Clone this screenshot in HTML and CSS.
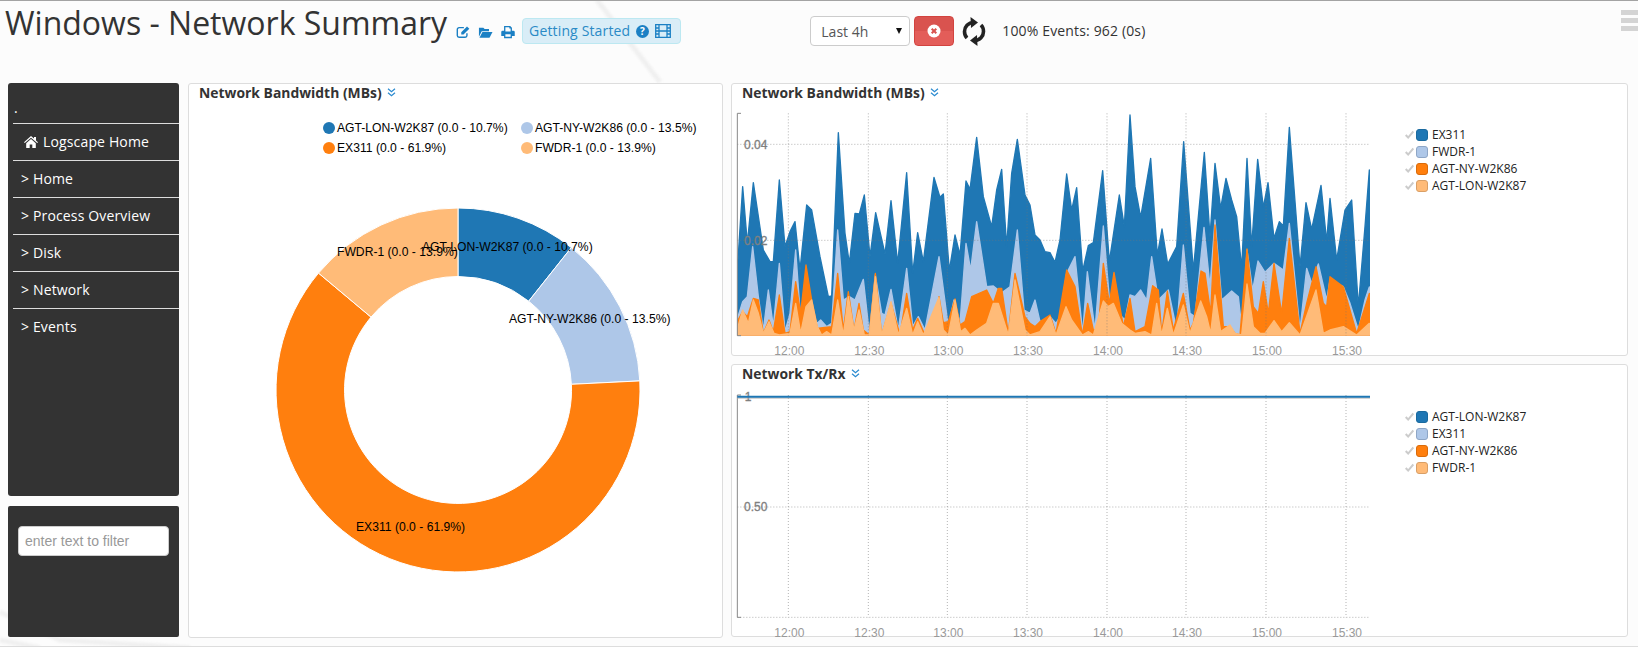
FILE: index.html
```html
<!DOCTYPE html>
<html>
<head>
	<meta charset="utf-8">
	<title>Windows - Network Summary</title>
	<link rel="stylesheet" href="styles.css">
</head>
<body>
<svg class="backdrop" width="1638" height="648" viewBox="0 0 1638 648">
	<path d="M597 0 660 82" class="streak"/>
	<path d="M0 612 60 640 190 648" class="streak"/>
	<path d="M0 640 40 648" class="streak"/>
</svg>

<div class="header">
	<h1 class="title">Windows - Network Summary</h1>
	<div class="tools">
		<svg class="tool" width="14" height="14" viewBox="0 0 16 16"><path d="M12.5 9.5V12a2 2 0 0 1-2 2H3.5a2 2 0 0 1-2-2V5a2 2 0 0 1 2-2H9" fill="none" stroke="currentColor" stroke-width="1.6"/><path d="M6 8.2 12.6 1.6l2.6 2.6L8.6 10.8H6z" fill="currentColor"/></svg>
		<svg class="tool" width="15" height="14" viewBox="0 0 17 16"><path d="M1 13.5V3h5l1.5 1.7h5V7H4.2z" fill="currentColor"/><path d="M5 8h11.5l-3.4 6.5H1.6z" fill="currentColor"/></svg>
		<svg class="tool" width="14" height="14" viewBox="0 0 16 16"><path fill-rule="evenodd" d="M3.5 1h7L12.5 3v3.5h1.7A1.5 1.5 0 0 1 15.700 8v4.500H12.500V15h-9v-2.500H.300V8a1.500 1.500 0 0 1 1.500-1.500h1.700zM5 2.500v5h6v-3.500H9.500V2.500zM5 10.500v3h6v-3z" fill="currentColor"/></svg>
		<div class="started">
			<span>Getting Started</span>
			<svg width="13" height="13" viewBox="0 0 13 13"><circle cx="6.500" cy="6.500" r="6.500" fill="currentColor"/><text x="6.500" y="10.300" class="qmark">?</text></svg>
			<svg width="16" height="14" viewBox="0 0 16 14"><path d="M.700.700h14.600v12.600H.700zM4 .700v12.600M12 .700v12.600M.700 4H4M.700 7H4M.700 10H4M12 4h3.300M12 7h3.300M12 10h3.300M4 7h8" fill="none" stroke="currentColor" stroke-width="1.300"/></svg>
		</div>
	</div>
	<div class="controls">
		<div class="period-wrap"><select class="period"><option>Last 4h</option></select></div>
		<button class="stop">
			<svg width="14" height="14" viewBox="0 0 14 14"><circle cx="7" cy="7" r="6.500" fill="#fff"/><path d="M4.700 4.700l4.600 4.600M9.300 4.700 4.700 9.300" stroke="#d9534f" stroke-width="2"/></svg>
		</button>
		<svg class="refresh" width="26" height="29" viewBox="0 0 26 29">
			<path d="M13 5.500C7 5.500 3.500 10 3.500 14.500c0 3 1 5 2.500 6.500" fill="none" stroke="#222" stroke-width="3.600"/>
			<path d="M9.500 0 17 5.500 10 11z" fill="#222"/>
			<path d="M13 23.500c6 0 9.500-4.500 9.500-9 0-3-1-5-2.500-6.500" fill="none" stroke="#222" stroke-width="3.600"/>
			<path d="M16.500 29 9 23.500 16 18z" fill="#222"/>
		</svg>
		<span class="events">100% Events: 962 (0s)</span>
	</div>
	<div class="burger"><i></i><i></i><i></i></div>
</div>

<div class="main">
	<div class="side">
		<div class="menu">
			<div class="menu-top">.</div>
			<ul>
				<li><svg class="home" width="14" height="12" viewBox="0 0 14 12"><path d="M7 0 10 2.600V1h2v3.400L14 6.200l-.8.900L7 1.800.8 7.100 0 6.200z" fill="#fff"/><path d="M2.200 7.200 7 3.100l4.800 4.100V12H8.300V8.600H5.700V12H2.200z" fill="#fff"/></svg>Logscape Home</li>
				<li class="link">&gt; Home</li>
				<li class="link">&gt; Process Overview</li>
				<li class="link">&gt; Disk</li>
				<li class="link">&gt; Network</li>
				<li class="link">&gt; Events</li>
			</ul>
		</div>
		<div class="filter">
			<input type="text" placeholder="enter text to filter">
		</div>
	</div>

	<div class="panel">
		<div class="panel-title">Network Bandwidth (MBs)<svg class="more" width="9" height="9" viewBox="0 0 9 9"><path d="M1 .800 4.500 3.800 8 .800M1 4.800 4.500 7.800 8 4.800" fill="none" stroke="currentColor" stroke-width="1.200"/></svg></div>
		<svg class="pie" width="533" height="536" viewBox="189 101 533 536">
			<g class="pie-slices">
				<path fill="#1f77b4" d="M458 208A182 182 0 0 1 571.300 247.600L528.700 301.200A113.500 113.500 0 0 0 458 276.500Z"/>
				<path fill="#aec7e8" d="M571.300 247.600A182 182 0 0 1 639.800 380.900L571.400 384.300A113.500 113.500 0 0 0 528.700 301.200Z"/>
				<path fill="#ff7f0e" d="M639.800 380.900A182 182 0 1 1 318.500 273.100L371 317.100A113.500 113.500 0 1 0 571.400 384.300Z"/>
				<path fill="#ffbb78" d="M318.500 273.100A182 182 0 0 1 458 208L458 276.500A113.500 113.500 0 0 0 371 317.100Z"/>
			</g>
			<circle cx="329" cy="128" r="6" fill="#1f77b4"/>
			<text x="337" y="132" class="pie-text">AGT-LON-W2K87 (0.0 - 10.7%)</text>
			<circle cx="527" cy="128" r="6" fill="#aec7e8"/>
			<text x="535" y="132" class="pie-text">AGT-NY-W2K86 (0.0 - 13.5%)</text>
			<circle cx="329" cy="148" r="6" fill="#ff7f0e"/>
			<text x="337" y="152" class="pie-text">EX311 (0.0 - 61.9%)</text>
			<circle cx="527" cy="148" r="6" fill="#ffbb78"/>
			<text x="535" y="152" class="pie-text">FWDR-1 (0.0 - 13.9%)</text>
			<text x="337" y="256" class="pie-text">FWDR-1 (0.0 - 13.9%)</text>
			<text x="422" y="251" class="pie-text">AGT-LON-W2K87 (0.0 - 10.7%)</text>
			<text x="509" y="323" class="pie-text">AGT-NY-W2K86 (0.0 - 13.5%)</text>
			<text x="356" y="531" class="pie-text">EX311 (0.0 - 61.9%)</text>
		</svg>
	</div>

	<div class="charts">
		<div class="panel">
			<div class="panel-title">Network Bandwidth (MBs)<svg class="more" width="9" height="9" viewBox="0 0 9 9"><path d="M1 .800 4.500 3.800 8 .800M1 4.800 4.500 7.800 8 4.800" fill="none" stroke="currentColor" stroke-width="1.200"/></svg></div>
			<div class="chart-row">
				<svg class="chart" width="638" height="254" viewBox="6 3 1914 762">
					<polygon class="a1" points="24,705 24,480 38,260 52,430 70,248 100,450 120,485 130,485 148,240 165,440 180,395 195,365 210,510 230,315 245,330 270,470 295,590 305,588 325,98 345,400 358,490 375,340 388,342 403,285 420,470 437,338 465,462 483,302 503,490 530,218 548,520 563,398 580,485 612,232 630,292 640,282 658,512 675,405 690,465 708,243 720,268 740,112 760,290 785,380 800,270 815,208 830,440 845,220 862,118 885,285 900,315 915,405 930,420 945,455 960,458 975,487 990,420 1010,222 1025,330 1040,263 1058,513 1075,437 1090,428 1118,212 1138,485 1168,285 1183,380 1200,45 1215,260 1232,352 1262,175 1282,465 1296,387 1313,492 1340,440 1361,125 1390,512 1423,157 1440,410 1455,190 1472,325 1488,235 1505,300 1520,350 1535,505 1551,175 1565,440 1583,178 1600,322 1614,248 1632,415 1648,365 1660,378 1678,82 1710,500 1728,308 1745,388 1773,256 1790,425 1800,295 1820,480 1845,330 1865,300 1885,620 1905,380 1918,210 1918,705"/>
					<polygon class="a2" points="24,705 24,650 38,605 52,590 68,440 85,590 100,690 115,570 130,680 148,490 165,695 180,640 197,450 212,660 228,560 245,640 262,670 272,660 290,680 305,670 323,390 340,600 358,590 375,600 400,538 418,700 436,525 455,640 465,645 483,568 505,690 530,505 548,680 565,650 585,690 627,470 655,680 672,600 690,670 708,430 722,510 740,365 770,560 790,558 815,578 840,560 862,390 882,630 900,640 915,600 930,665 945,660 960,650 978,670 990,650 1010,520 1035,470 1058,700 1072,515 1095,690 1120,378 1140,620 1165,640 1185,660 1200,585 1215,590 1232,570 1250,600 1265,470 1285,600 1315,570 1340,690 1360,435 1380,640 1395,650 1422,382 1440,560 1455,360 1475,600 1505,573 1525,590 1537,700 1551,450 1568,570 1584,483 1605,517 1632,490 1660,510 1678,370 1710,690 1730,505 1745,550 1765,492 1790,600 1800,540 1840,560 1860,610 1885,690 1905,600 1918,561 1918,705"/>
					<polygon class="a3" points="24,705 24,660 38,635 52,650 70,595 85,600 100,700 117,660 130,695 148,585 165,700 180,695 197,545 212,640 228,495 245,600 262,685 285,682 305,680 323,520 340,690 355,575 372,690 387,610 400,690 418,705 436,520 455,705 483,610 510,705 530,580 548,690 563,655 585,705 595,698 610,705 627,590 640,668 655,665 675,597 690,675 705,665 725,590 770,570 790,610 805,565 815,565 835,700 855,520 885,650 900,670 915,680 930,665 960,645 978,700 1010,510 1035,560 1057,705 1073,610 1090,690 1105,690 1120,490 1138,610 1152,517 1180,680 1200,595 1215,695 1245,680 1268,557 1285,570 1295,700 1312,573 1330,690 1360,580 1380,690 1390,670 1413,513 1425,520 1442,640 1455,375 1480,680 1500,680 1515,700 1530,705 1551,447 1570,620 1585,640 1600,545 1615,640 1632,490 1655,640 1678,415 1710,700 1730,610 1758,500 1780,610 1790,620 1800,530 1840,560 1880,700 1918,580 1918,705"/>
					<polygon class="a4" points="24,705 24,680 38,630 55,670 70,600 85,640 100,700 117,665 132,700 148,705 180,700 197,610 212,700 228,620 245,600 262,680 275,705 290,695 305,705 323,600 340,705 355,590 372,690 387,630 403,705 418,705 436,530 455,705 483,605 505,705 530,625 548,705 563,665 580,705 627,592 640,690 655,705 675,600 692,695 705,685 720,705 740,690 770,670 790,610 805,610 835,705 855,540 885,690 900,705 930,695 960,650 978,705 1008,620 1025,660 1057,705 1075,695 1090,705 1120,603 1135,620 1150,610 1175,670 1200,690 1215,700 1245,695 1265,705 1280,610 1295,705 1312,625 1330,705 1360,615 1380,700 1412,603 1430,650 1442,700 1455,585 1472,695 1500,675 1515,700 1535,705 1551,552 1570,680 1590,700 1605,700 1632,662 1655,695 1678,668 1710,705 1758,570 1780,700 1800,690 1840,680 1880,705 1918,670 1918,705"/>
					<path class="grid" d="M175 40V707M415 40V707M652 40V707M891 40V707M1131 40V707M1368 40V707M1608 40V707M1848 40V707M22 133H1920M22 421H1920"/>
					<path class="axis" d="M33 40H22V707H33"/>
					<text x="42" y="146" class="tick-y">0.04</text>
					<text x="42" y="434" class="tick-y">0.02</text>
					<text x="178" y="766" class="tick-x">12:00</text>
					<text x="418" y="766" class="tick-x">12:30</text>
					<text x="655" y="766" class="tick-x">13:00</text>
					<text x="894" y="766" class="tick-x">13:30</text>
					<text x="1134" y="766" class="tick-x">14:00</text>
					<text x="1371" y="766" class="tick-x">14:30</text>
					<text x="1611" y="766" class="tick-x">15:00</text>
					<text x="1851" y="766" class="tick-x">15:30</text>
				</svg>
				<ul class="legend legend-top">
					<li><svg class="check" width="9" height="9" viewBox="0 0 8 8"><path d="M.600 4.500 2.800 6.700 7.400 1.300" fill="none" stroke="currentColor" stroke-width="1.800"/></svg><i class="swatch c1"></i>EX311</li>
					<li><svg class="check" width="9" height="9" viewBox="0 0 8 8"><path d="M.600 4.500 2.800 6.700 7.400 1.300" fill="none" stroke="currentColor" stroke-width="1.800"/></svg><i class="swatch c2"></i>FWDR-1</li>
					<li><svg class="check" width="9" height="9" viewBox="0 0 8 8"><path d="M.600 4.500 2.800 6.700 7.400 1.300" fill="none" stroke="currentColor" stroke-width="1.800"/></svg><i class="swatch c3"></i>AGT-NY-W2K86</li>
					<li><svg class="check" width="9" height="9" viewBox="0 0 8 8"><path d="M.600 4.500 2.800 6.700 7.400 1.300" fill="none" stroke="currentColor" stroke-width="1.800"/></svg><i class="swatch c4"></i>AGT-LON-W2K87</li>
				</ul>
			</div>
		</div>
		<div class="panel">
			<div class="panel-title">Network Tx/Rx<svg class="more" width="9" height="9" viewBox="0 0 9 9"><path d="M1 .800 4.500 3.800 8 .800M1 4.800 4.500 7.800 8 4.800" fill="none" stroke="currentColor" stroke-width="1.200"/></svg></div>
			<div class="chart-row">
				<svg class="chart" width="638" height="254" viewBox="6 66 1914 762">
					<path class="grid" d="M175 105V772M415 105V772M652 105V772M891 105V772M1131 105V772M1368 105V772M1608 105V772M1848 105V772M22 441H1920M22 772H1920"/>
					<path class="axis" d="M33 105H22V772H33"/>
					<text x="44" y="123" class="tick-y">1</text>
					<text x="42" y="454" class="tick-y">0.50</text>
					<path d="M22 114H1920" stroke="#aaa" stroke-width="3"/>
					<path d="M22 110.500H1920" stroke="#1f77b4" stroke-width="6"/>
					<text x="178" y="831" class="tick-x">12:00</text>
					<text x="418" y="831" class="tick-x">12:30</text>
					<text x="655" y="831" class="tick-x">13:00</text>
					<text x="894" y="831" class="tick-x">13:30</text>
					<text x="1134" y="831" class="tick-x">14:00</text>
					<text x="1371" y="831" class="tick-x">14:30</text>
					<text x="1611" y="831" class="tick-x">15:00</text>
					<text x="1851" y="831" class="tick-x">15:30</text>
				</svg>
				<ul class="legend">
					<li><svg class="check" width="9" height="9" viewBox="0 0 8 8"><path d="M.600 4.500 2.800 6.700 7.400 1.300" fill="none" stroke="currentColor" stroke-width="1.800"/></svg><i class="swatch c1"></i>AGT-LON-W2K87</li>
					<li><svg class="check" width="9" height="9" viewBox="0 0 8 8"><path d="M.600 4.500 2.800 6.700 7.400 1.300" fill="none" stroke="currentColor" stroke-width="1.800"/></svg><i class="swatch c2"></i>EX311</li>
					<li><svg class="check" width="9" height="9" viewBox="0 0 8 8"><path d="M.600 4.500 2.800 6.700 7.400 1.300" fill="none" stroke="currentColor" stroke-width="1.800"/></svg><i class="swatch c3"></i>AGT-NY-W2K86</li>
					<li><svg class="check" width="9" height="9" viewBox="0 0 8 8"><path d="M.600 4.500 2.800 6.700 7.400 1.300" fill="none" stroke="currentColor" stroke-width="1.800"/></svg><i class="swatch c4"></i>FWDR-1</li>
				</ul>
			</div>
		</div>
	</div>
</div>
<div class="footer"></div>
</body>
</html>
```
FILE: styles.css
```css
html,body{height:100%;overflow:hidden;}
body,div,ul,li,h1{margin:0;padding:0;}
body{background:#fcfcfc;color:#333;font:14px/20px "Open Sans","Liberation Sans",sans-serif;border-top:1px solid #a3a3a3;box-sizing:border-box;}
ul{list-style-type:none;}
svg{display:block;}

.backdrop{position:absolute;top:0;left:0;z-index:-1;}
.streak{fill:none;stroke:#f0f0f0;stroke-width:5;filter:blur(1px);}

.header{display:flex;align-items:flex-start;height:82px;padding-left:5px;}
.title{font-size:32px;line-height:40px;font-weight:400;margin-top:2px;white-space:nowrap;}
.tools{display:flex;align-items:center;height:26px;margin:17px 0 0 9px;color:#1b80c4;}
.tool{margin-right:8px;margin-top:1px;}
.started{display:flex;align-items:center;height:26px;box-sizing:border-box;padding:0 9px 0 6px;margin-left:-1px;background:#d9edf7;border:1px solid #bce8f1;border-radius:4px;color:#2a8ac6;letter-spacing:.15px;}
.started svg{margin-left:6px;color:#1b80c4;}
.qmark{font:700 10px "Open Sans",sans-serif;fill:#fff;text-anchor:middle;}

.controls{display:flex;align-items:center;height:30px;margin:15px 0 0 129px;}
.period-wrap{position:relative;}
.period-wrap::after{content:"";position:absolute;top:12px;right:8px;border-style:solid;border-width:6px 3px 0;border-color:#111 transparent transparent;}
.period{display:block;appearance:none;width:100px;height:30px;padding:0 10px;background:#fff;border:1px solid #ccc;border-radius:4px;color:#555;font:14px "Open Sans",sans-serif;}
.stop{display:flex;align-items:center;justify-content:center;width:40px;height:30px;margin-left:4px;padding:0;border:1px solid #d2433f;border-radius:4px;background:linear-gradient(#d9534f 50%,#e35d59 50%);}
.refresh{margin-left:7px;}
.events{margin-left:15px;white-space:nowrap;letter-spacing:.15px;}
.burger{display:flex;flex-direction:column;gap:3px;width:17px;margin:9px 0 0 auto;}
.burger i{display:block;height:5px;background:#d4d4d4;}

.main{display:grid;grid-template-columns:172px 535px 897px;column-gap:8px;height:555px;padding-left:8px;}
.side{display:flex;flex-direction:column;gap:10px;padding:0 1px 1px 0;}
.menu{flex:1;background:#333;border-radius:3px;color:#fff;padding-left:5px;letter-spacing:.15px;}
.menu-top{height:40px;padding:15px 0 0 1px;box-sizing:border-box;}
.menu li{height:37px;box-sizing:border-box;border-top:1px solid #ddd;display:flex;align-items:center;padding-left:11px;white-space:nowrap;}
.menu li.link{padding-left:8px;}
.home{margin-right:5px;}
.filter{height:131px;box-sizing:border-box;background:#333;border-radius:2px;padding:20px 10px;}
.filter input{display:block;width:100%;height:30px;box-sizing:border-box;padding:0 6px;border:1px solid #ccc;border-radius:4px;font:14px "Liberation Sans",sans-serif;}
.filter input::placeholder{color:#999;}

.panel{background:#fff;border:1px solid #ddd;border-radius:3px;box-sizing:border-box;}
.panel-title{display:flex;align-items:center;gap:5px;height:17px;padding-left:10px;font-weight:700;font-size:13.9px;color:#333;white-space:pre;}
.more{color:#2a8ad0;}
.pie-slices path{stroke:#fff;stroke-width:1;}
.pie-text{font:12.15px "Liberation Sans",sans-serif;fill:#000;}

.charts{display:flex;flex-direction:column;gap:8px;}
.charts .panel{height:273px;}
.chart-row{display:flex;}
.chart{overflow:visible;}
.chart polygon{stroke-width:4;stroke-linejoin:round;}
.a1{fill:#1f77b4;stroke:#1f77b4;}
.a2{fill:#aec7e8;stroke:#aec7e8;}
.a3{fill:#ff7f0e;stroke:#ff7f0e;}
.a4{fill:#ffbb78;stroke:#ffbb78;}
.grid{fill:none;stroke:#777;stroke-opacity:.55;stroke-width:3;stroke-dasharray:3 6;}
.axis{fill:none;stroke:#888;stroke-width:3;}
.tick-y{font:36px "Liberation Sans",sans-serif;fill:#777;stroke:#888;stroke-width:1;}
.tick-x{font:36px "Liberation Sans",sans-serif;fill:#999;text-anchor:middle;}

.legend{margin:26px 0 0 35px;font-size:12px;line-height:17px;color:#222;}
.legend-top{margin-top:25px;}
.legend li{display:flex;align-items:center;height:17px;white-space:nowrap;}
.check{color:#ccc;margin-right:2px;}
.swatch{display:block;width:12px;height:12px;box-sizing:border-box;border:1px solid;border-radius:3px;margin-right:4px;}
.c1{background:#1f77b4;border-color:#1a6a9f;}
.c2{background:#aec7e8;border-color:#8ea6c6;}
.c3{background:#ff7f0e;border-color:#d96c0c;}
.c4{background:#ffbb78;border-color:#d99f66;}

.footer{height:10px;margin-top:8px;background:#fff;border-top:1px solid #ddd;}
```
